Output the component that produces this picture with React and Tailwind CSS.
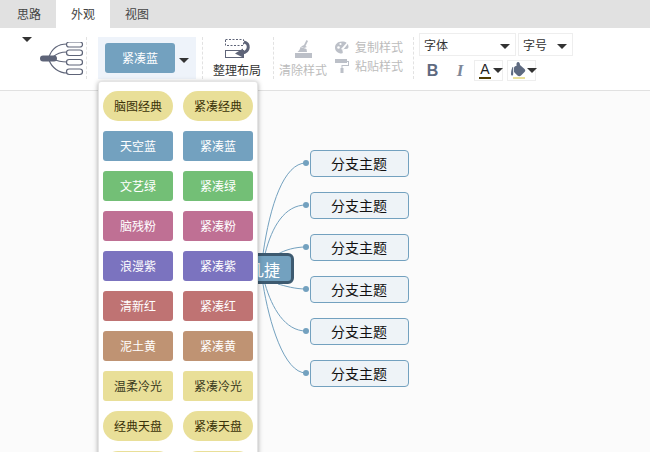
const themes = [
  ["脑图经典", "紧凑经典", "bg-[#e9df98]", "text-[#3a3208]", "rounded-[15px]"],
  ["天空蓝", "紧凑蓝", "bg-[#73a1bf]", "text-white", "rounded-[3px]"],
  ["文艺绿", "紧凑绿", "bg-[#73bf76]", "text-white", "rounded-[3px]"],
  ["脑残粉", "紧凑粉", "bg-[#bf7094]", "text-white", "rounded-[3px]"],
  ["浪漫紫", "紧凑紫", "bg-[#7b73bf]", "text-white", "rounded-[3px]"],
  ["清新红", "紧凑红", "bg-[#bf7373]", "text-white", "rounded-[3px]"],
  ["泥土黄", "紧凑黄", "bg-[#bf9373]", "text-white", "rounded-[3px]"],
  ["温柔冷光", "紧凑冷光", "bg-[#e9df98]", "text-[#3a3a20]", "rounded-[3px]"],
  ["经典天盘", "紧凑天盘", "bg-[#e9df98]", "text-[#3a3208]", "rounded-[15px]"],
];

const Caret = ({ className = "" }) => (
  <span className={"block w-0 h-0 border-l-[5px] border-r-[5px] border-t-[5px] border-l-transparent border-r-transparent border-t-[#333] " + className} />
);

const Sep = ({ className = "" }) => (
  <div className={"w-0 h-[42px] border-l border-dashed border-[#e2e2e2] " + className} />
);

const StructureIcon = () => (
  <svg width="44" height="36" viewBox="0 0 44 36" fill="none" stroke="#5e6478" strokeWidth="1.2">
    <path d="M9 15 C12 6 19 2 27 2 M13 15 C17 11 21 10 27 10 M13 17 C17 19 21 20 27 20 M9 18 C12 26 19 31 27 31" />
    <rect x="26.5" y="0" width="16" height="5" rx="2.5" fill="#fff" />
    <rect x="26.5" y="8" width="16" height="5.5" rx="2.7" fill="#fff" />
    <rect x="26.5" y="17.5" width="16" height="5.5" rx="2.7" fill="#fff" />
    <rect x="26.5" y="27" width="16" height="5.5" rx="2.7" fill="#fff" />
    <rect x="0" y="13.5" width="17" height="6" rx="3" fill="#5e6478" stroke="none" />
  </svg>
);

const LayoutIcon = () => (
  <svg width="26" height="20" viewBox="0 0 26 20" fill="none">
    <rect x="0.5" y="0.5" width="18" height="6" stroke="#5e6478" strokeDasharray="2 1.5" />
    <rect x="0.5" y="11.5" width="18" height="7" stroke="#5e6478" />
    <path d="M19 3 C25 4 25 13 17 14" stroke="#5e6478" strokeWidth="3" />
    <path d="M10 14.5 L18 9.5 L18 18.5 Z" fill="#5e6478" />
  </svg>
);

const BroomIcon = () => (
  <svg width="18" height="18" viewBox="0 0 18 18" fill="#bcc0c8">
    <path d="M11.5 0 L13 1 L10.5 6 L12 7 L9 8 L6 6.5 L9 5 Z" />
    <path d="M5.5 7 L11.5 9 L12 12 L2.5 12 C4 11 5 9 5.5 7 Z" />
    <rect x="0" y="13" width="17" height="5" />
  </svg>
);

const PaletteIcon = () => (
  <svg width="14" height="13" viewBox="0 0 14 13" fill="#bcc0c8">
    <path d="M7 0.5 C2.5 0.5 0 3.5 0 6.5 C0 10 3 12.5 6.5 12.5 C8 12.5 8 11 7.5 10 C7 9 8 8 9.5 8 L11 8 C13 8 13.5 7 13.5 5.5 C13.5 2.5 11 0.5 7 0.5 Z" />
    <circle cx="3.5" cy="6.5" r="1.3" fill="#fff" />
    <circle cx="5.5" cy="3" r="1.1" fill="#fff" />
    <path d="M6 8 L12.5 1 L13.5 2 L8 9 Z" fill="#fff" />
  </svg>
);

const RollerIcon = () => (
  <svg width="14" height="14" viewBox="0 0 14 14" fill="#bcc0c8">
    <rect x="0" y="0" width="12" height="4" />
    <path d="M12 2 L14 2 L14 7 L7.5 7 L7.5 9 L6.5 9 L6.5 6 L13 6 L13 3 L12 3 Z" />
    <rect x="5.5" y="9" width="3" height="5" />
  </svg>
);

const BucketIcon = () => (
  <svg width="15" height="15" viewBox="0 0 15 15" fill="#5e6a80">
    <path d="M7 0 C8.5 0 9 1.5 9 3 L13.5 7 C14.5 8 14.5 9 13.5 10 L10 13.5 C9 14.5 7.5 14.5 6.5 13.5 L3 10 L3 6 C3 4.5 4.5 4 5.5 4 L5.5 2 C5.5 1 6 0 7 0 Z" />
    <path d="M1.5 5 C0.5 7 0 10 0 12 C0 14 2.2 14 2.2 12 L2.2 5 Z" />
  </svg>
);

const ThemeBtn = ({ label, bg, fg, radius }) => (
  <div className={"w-[70px] h-[30px] flex items-center justify-center text-[12px] " + bg + " " + fg + " " + radius}>
    {label}
  </div>
);

const tops = [150, 192, 234, 276, 318, 360];

export default function App() {
  return (
    <div className="relative w-[650px] h-[452px] overflow-hidden flex flex-col bg-[#fbfbfb] text-[#333] font-['Noto_Sans_CJK_SC','Liberation_Sans',sans-serif]">
      {/* tabs */}
      <div className="h-[28px] shrink-0 bg-[#e1e1e1] flex pl-[2px] text-[12px]">
        <div className="w-[54px] flex items-center justify-center text-[#444]">思路</div>
        <div className="w-[54px] flex items-center justify-center bg-white text-[#444]">外观</div>
        <div className="w-[54px] flex items-center justify-center text-[#444]">视图</div>
      </div>

      {/* toolbar */}
      <div className="h-[63px] shrink-0 bg-white border-b border-[#e1e1e1] flex items-start">
        <div className="w-[86px] h-[50px] relative flex items-start shrink-0">
          <Caret className="ml-[22px] mt-[9px]" />
          <div className="ml-[8px] mt-[14px]"><StructureIcon /></div>
        </div>
        <Sep className="mt-[9px]" />
        <div className="ml-[11px] mt-[9px] w-[98px] h-[42px] bg-[#eef3fa] flex items-center pl-[7px] shrink-0">
          <div className="w-[70px] h-[30px] rounded-[3px] bg-[#73a1bf] text-white text-[12px] flex items-center justify-center">紧凑蓝</div>
          <Caret className="ml-[4px] mt-[5px]" />
        </div>
        <Sep className="ml-[6px] mt-[9px]" />
        <div className="ml-[10px] w-[48px] shrink-0 flex flex-col items-center mt-[11px]">
          <div className="ml-[2px] h-[20px]"><LayoutIcon /></div>
          <div className="mt-[3px] text-[12px] leading-[16px] whitespace-nowrap text-[#333]">整理布局</div>
        </div>
        <Sep className="ml-[12px] mt-[9px]" />
        <div className="ml-[5px] w-[48px] shrink-0 flex flex-col items-center mt-[12px]">
          <div className="ml-[2px] h-[18px]"><BroomIcon /></div>
          <div className="mt-[4px] text-[12px] leading-[16px] whitespace-nowrap text-[#bcbcbc]">清除样式</div>
        </div>
        <div className="ml-[8px] mt-[11px] flex flex-col gap-[3px] text-[12px] leading-[16px] text-[#bcbcbc] shrink-0">
          <div className="flex items-center gap-[6px]"><PaletteIcon /><span>复制样式</span></div>
          <div className="flex items-center gap-[6px]"><RollerIcon /><span>粘贴样式</span></div>
        </div>
        <Sep className="ml-[10px] mt-[9px]" />
        <div className="ml-[5px] mt-[5px] flex flex-col gap-[4px] shrink-0">
          <div className="flex gap-[2px]">
            <div className="w-[97px] h-[23px] border border-[#eeeeee] flex items-center justify-between pl-[4px] pr-[5px] text-[12px] text-[#333]">
              <span>字体</span><Caret className="mt-[3px]" />
            </div>
            <div className="w-[55px] h-[23px] border border-[#eeeeee] flex items-center justify-between pl-[4px] pr-[5px] text-[12px] text-[#333]">
              <span>字号</span><Caret className="mt-[3px]" />
            </div>
          </div>
          <div className="flex items-center">
            <div className="w-[27px] text-center text-[16px] font-bold leading-[21px] text-[#5e6a80] font-['Liberation_Sans',sans-serif]">B</div>
            <div className="w-[28px] text-center text-[17px] italic font-bold leading-[21px] text-[#7e8798] font-['Liberation_Serif',serif]">I</div>
            <div className="w-[29px] h-[21px] border border-[#eeeeee] flex items-center pl-[4px] gap-[1px]">
              <div className="flex flex-col items-center w-[12px]">
                <span className="text-[14px] leading-[15px] text-[#222] font-['Liberation_Sans',sans-serif]">A</span>
                <span className="block w-[12px] h-[2px] bg-[#4f3a00]" />
              </div>
              <Caret className="ml-[1px]" />
            </div>
            <div className="ml-[4px] w-[29px] h-[21px] border border-[#eeeeee] flex items-center pl-[3px]">
              <div className="flex flex-col items-center w-[15px]">
                <div className="h-[15px] overflow-hidden"><BucketIcon /></div>
                <span className="block w-[12px] h-[2px] bg-[#e9df98]" />
              </div>
              <Caret className="ml-[1px]" />
            </div>
          </div>
        </div>
      </div>

      {/* canvas */}
      <div className="flex-1" />

      {/* connectors */}
      <svg className="absolute left-0 top-0" width="650" height="452" fill="none" stroke="#73a1bf" strokeWidth="1">
        <path d="M263 254 C270 205 284 163 306 163" />
        <path d="M265 254 C272 226 285 205 306 205" />
        <path d="M278 254 C285 250 295 247 306 247" />
        <path d="M278 284 C285 286 295 289 306 289" />
        <path d="M265 284 C272 308 285 331 306 331" />
        <path d="M263 284 C269 322 284 373 306 373" />
        {tops.map((t) => (
          <circle key={t} cx="306" cy={t + 13} r="3" fill="#73a1bf" stroke="none" />
        ))}
      </svg>

      {/* root node */}
      <div className="absolute left-[222px] top-[253px] w-[72px] h-[31px] rounded-[6px] border-[3px] border-[#3d5a70] bg-[#73a1bf] text-white text-[16px] flex items-center justify-end pr-[11px]">
        几捷
      </div>

      {/* branch nodes */}
      {tops.map((t) => (
        <div
          key={t}
          style={{ top: t }}
          className="absolute left-[310px] w-[99px] h-[27px] rounded-[4px] border border-[#73a1bf] bg-[#eef3f7] text-[#111] text-[14px] flex items-center justify-center pr-[1px]"
        >
          分支主题
        </div>
      ))}

      {/* dropdown */}
      <div className="absolute left-[98px] top-[81px] w-[160px] h-[380px] bg-white rounded-[3px] border border-[#e4e4e4] shadow-[0_1px_5px_rgba(0,0,0,0.35)] pl-[4px] pt-[9px] flex flex-col gap-[10px]">
        {themes.map(([a, b, bg, fg, radius]) => (
          <div key={a} className="flex gap-[10px]">
            <ThemeBtn label={a} bg={bg} fg={fg} radius={radius} />
            <ThemeBtn label={b} bg={bg} fg={fg} radius={radius} />
          </div>
        ))}
        <div className="flex gap-[10px]">
          <div className="w-[70px] h-[30px] bg-[#e9df98] rounded-[15px]" />
          <div className="w-[70px] h-[30px] bg-[#e9df98] rounded-[15px]" />
        </div>
      </div>
    </div>
  );
}
